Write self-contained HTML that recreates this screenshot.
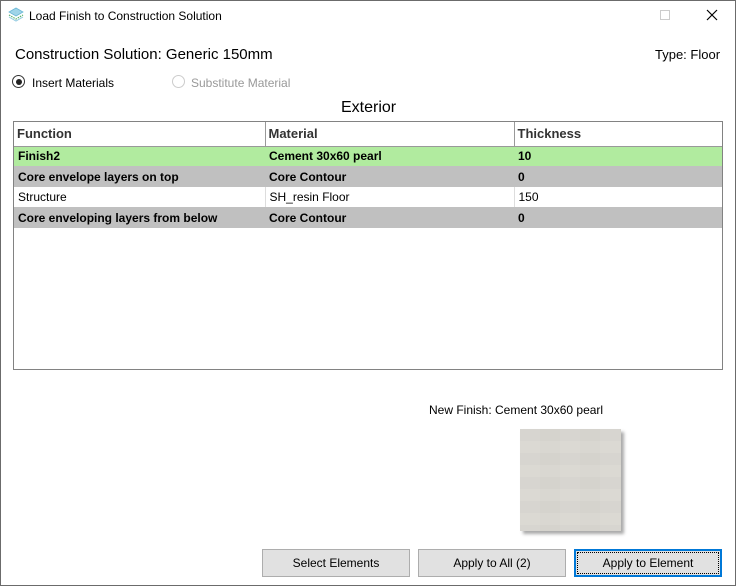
<!DOCTYPE html>
<html><head><style>
*{margin:0;padding:0;box-sizing:border-box}
body{width:736px;height:586px;background:#fff;font-family:"Liberation Sans",Arial,sans-serif;position:relative;overflow:hidden}
.frame{position:absolute;left:0;top:0;width:736px;height:586px;border:1px solid #6b6b6b}
.a{position:absolute;white-space:nowrap}
.t{font-size:12px;color:#000}
table{border-collapse:collapse;font-size:12px}
.btn{position:absolute;top:549px;height:28px;background:#e1e1e1;border:1px solid #adadad;font-size:12px;text-align:center;line-height:26px}
</style></head><body>
<div class="frame"></div>
<svg class="a" style="left:8px;top:7px" width="16" height="16" viewBox="0 0 16 16"><path d="M8 1L15 5L8 9L1 5Z" fill="#9fd4e8" stroke="#6ab7d6" stroke-width=".8"/><path d="M1 8L8 12L15 8" fill="none" stroke="#5ab06a" stroke-width="1.2" stroke-dasharray="1.5 1"/><path d="M1 10L8 14L15 10" fill="none" stroke="#8fc9e0" stroke-width="1"/></svg>
<div class="a t" style="left:29px;top:9px">Load Finish to Construction Solution</div>
<div class="a" style="left:660px;top:10px;width:10px;height:10px;border:1px solid #ccc"></div>
<svg class="a" style="left:706px;top:9px" width="12" height="12"><path d="M1 1L11 11M11 1L1 11" stroke="#000" stroke-width="1.2"/></svg>
<div class="a" style="left:15px;top:46px;font-size:15px">Construction Solution: Generic 150mm</div>
<div class="a" style="left:655px;top:47px;font-size:13px">Type: Floor</div>
<div class="a" style="left:12px;top:75px;width:13px;height:13px;border:1px solid #333;border-radius:50%"><div style="margin:2.5px;width:6px;height:6px;background:#222;border-radius:50%"></div></div>
<div class="a t" style="left:32px;top:76px">Insert Materials</div>
<div class="a" style="left:172px;top:75px;width:13px;height:13px;border:1px solid #ccc;border-radius:50%"></div>
<div class="a t" style="left:191px;top:76px;color:#999">Substitute Material</div>
<div class="a" style="left:341px;top:99px;font-size:16px">Exterior</div>
<div class="a" style="left:13px;top:121px;width:710px;height:249px;border:1px solid #828282">
<table style="width:708px">
<tr style="height:24px;font-weight:bold;font-size:13px;color:#333"><td style="width:251px;padding-left:3px;border-right:1px solid #999;border-bottom:1px solid #999">Function</td><td style="width:249px;padding-left:3px;border-right:1px solid #999;border-bottom:1px solid #999">Material</td><td style="padding-left:3px;border-bottom:1px solid #999">Thickness</td></tr>
<tr style="height:20px;background:#b1eb9f;font-weight:bold"><td style="padding-left:4px">Finish2</td><td style="padding-left:4px">Cement 30x60 pearl</td><td style="padding-left:4px">10</td></tr>
<tr style="height:21px;background:#c0c0c0;font-weight:bold"><td style="padding-left:4px">Core envelope layers on top</td><td style="padding-left:4px">Core Contour</td><td style="padding-left:4px">0</td></tr>
<tr style="height:20px"><td style="padding-left:4px;border-right:1px solid #ddd">Structure</td><td style="padding-left:4px;border-right:1px solid #ddd">SH_resin Floor</td><td style="padding-left:4px">150</td></tr>
<tr style="height:21px;background:#c0c0c0;font-weight:bold"><td style="padding-left:4px">Core enveloping layers from below</td><td style="padding-left:4px">Core Contour</td><td style="padding-left:4px">0</td></tr>
</table></div>
<div class="a t" style="left:429px;top:403px">New Finish: Cement 30x60 pearl</div>
<div class="a" style="left:520px;top:429px;width:101px;height:102px;background:#d9d7d1;box-shadow:3px 3px 3px #aaa;background-image:linear-gradient(90deg,rgba(255,255,255,.05) 50%,transparent 50%),linear-gradient(rgba(0,0,0,.02) 50%,transparent 50%);background-size:40px 100%,100% 24px"></div>
<div class="btn" style="left:262px;width:148px">Select Elements</div>
<div class="btn" style="left:418px;width:148px">Apply to All (2)</div>
<div class="btn" style="left:574px;width:148px;border:2px solid #0078d7;line-height:24px"><div style="position:absolute;inset:1px;border:1px dotted #000"></div>Apply to Element</div>
</body></html>
